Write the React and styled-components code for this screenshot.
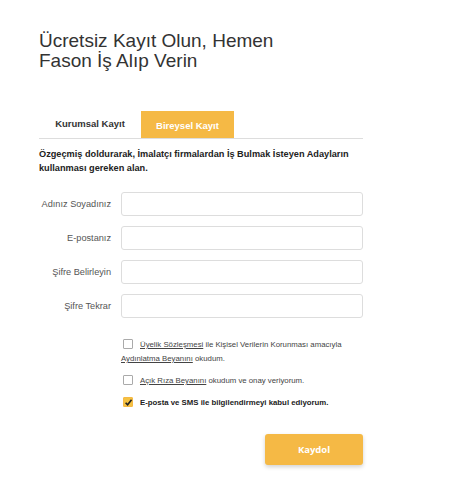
import React from "react";
import styled, { createGlobalStyle } from "styled-components";

const Global = createGlobalStyle`
  html, body { margin: 0; padding: 0; background: #fff; }
  body { font-family: "Liberation Sans", Arial, sans-serif; color: #333; }
  * { box-sizing: border-box; }
`;

const Page = styled.div`
  width: 464px;
  height: 490px;
  padding: 31px 0 0 39px;
`;

const Panel = styled.div`
  width: 324px;
  display: flex;
  flex-direction: column;
`;

const Title = styled.h1`
  margin: 0;
  font-size: 19px;
  line-height: 20px;
  font-weight: 400;
  color: #333;
`;

const Tabs = styled.div`
  margin-top: 40px;
  display: flex;
  border-bottom: 1px solid #ddd;
  height: 28px;
  align-items: stretch;
`;

const Tab = styled.div`
  width: ${(p) => p.$w}px;
  display: flex;
  align-items: ${(p) => (p.$active ? "center" : "flex-start")};
  padding-top: ${(p) => (p.$active ? 1 : 7)}px;
  justify-content: center;
  font-size: 9.5px;
  font-weight: 700;
  color: ${(p) => (p.$active ? "#fff" : "#333")};
  background: ${(p) => (p.$active ? "#f5b945" : "transparent")};
`;

const Desc = styled.p`
  margin: 8px 0 0;
  font-size: 9.2px;
  line-height: 14px;
  font-weight: 700;
  color: #222;
`;

const Fields = styled.div`
  margin-top: 17px;
  display: flex;
  flex-direction: column;
  gap: 10px;
`;

const Row = styled.div`
  display: grid;
  grid-template-columns: 72px 242px;
  column-gap: 10px;
  align-items: center;
`;

const Label = styled.label`
  text-align: right;
  font-size: 9.2px;
  color: #555;
`;

const Input = styled.input`
  height: 24px;
  width: 100%;
  border: 1px solid #ddd;
  border-radius: 3px;
  background: #fff;
  outline: none;
`;

const Checks = styled.div`
  margin: 20px 0 0 82px;
  display: flex;
  flex-direction: column;
  gap: 8px;
`;

const Check = styled.div`
  font-size: 7.8px;
  line-height: 14px;
  color: ${(p) => (p.$bold ? "#222" : "#444")};
  font-weight: ${(p) => (p.$bold ? 700 : 400)};
`;

const Box = styled.span`
  display: inline-block;
  width: 10px;
  height: 10px;
  margin: 0 7px 0 2px;
  vertical-align: -2px;
  border: 1px solid ${(p) => (p.$on ? "#f5b945" : "#aaa")};
  border-radius: 1px;
  background: ${(p) => (p.$on ? "#f5c242" : "#fff")};
  position: relative;
`;

const Link = styled.a`
  color: #444;
  text-decoration: underline;
`;

const Actions = styled.div`
  margin-top: 24px;
  display: flex;
  justify-content: flex-end;
`;

const Button = styled.button`
  width: 98px;
  height: 31px;
  border: none;
  border-radius: 3px;
  background: #f5b945;
  color: #fff;
  font-family: "Open Sans", sans-serif;
  font-weight: 700;
  font-size: 9.5px;
  box-shadow: 0 2px 4px rgba(0, 0, 0, 0.18);
`;

const Tick = () => (
  <svg width="9" height="9" viewBox="0 0 10 10" style={{ position: "absolute", left: 0, top: 0 }}>
    <path d="M1.8 5.2 L4 7.6 L8.4 2" fill="none" stroke="#222" strokeWidth="1.8" />
  </svg>
);

export default function App() {
  return (
    <Page>
      <Global />
      <Panel>
        <Title>
          Ücretsiz Kayıt Olun, Hemen
          <br />
          Fason İş Alıp Verin
        </Title>
        <Tabs>
          <Tab $w={102}>Kurumsal Kayıt</Tab>
          <Tab $w={93} $active>Bireysel Kayıt</Tab>
        </Tabs>
        <Desc>
          Özgeçmiş doldurarak, İmalatçı firmalardan İş Bulmak İsteyen Adayların kullanması gereken alan.
        </Desc>
        <Fields>
          <Row>
            <Label>Adınız Soyadınız</Label>
            <Input />
          </Row>
          <Row>
            <Label>E-postanız</Label>
            <Input />
          </Row>
          <Row>
            <Label>Şifre Belirleyin</Label>
            <Input type="password" />
          </Row>
          <Row>
            <Label>Şifre Tekrar</Label>
            <Input type="password" />
          </Row>
        </Fields>
        <Checks>
          <Check>
            <Box />
            <Link>Üyelik Sözleşmesi</Link> ile Kişisel Verilerin Korunması amacıyla <Link>Aydınlatma Beyanını</Link> okudum.
          </Check>
          <Check>
            <Box />
            <Link>Açık Rıza Beyanını</Link> okudum ve onay veriyorum.
          </Check>
          <Check $bold>
            <Box $on>
              <Tick />
            </Box>
            E-posta ve SMS ile bilgilendirmeyi kabul ediyorum.
          </Check>
        </Checks>
        <Actions>
          <Button>Kaydol</Button>
        </Actions>
      </Panel>
    </Page>
  );
}
